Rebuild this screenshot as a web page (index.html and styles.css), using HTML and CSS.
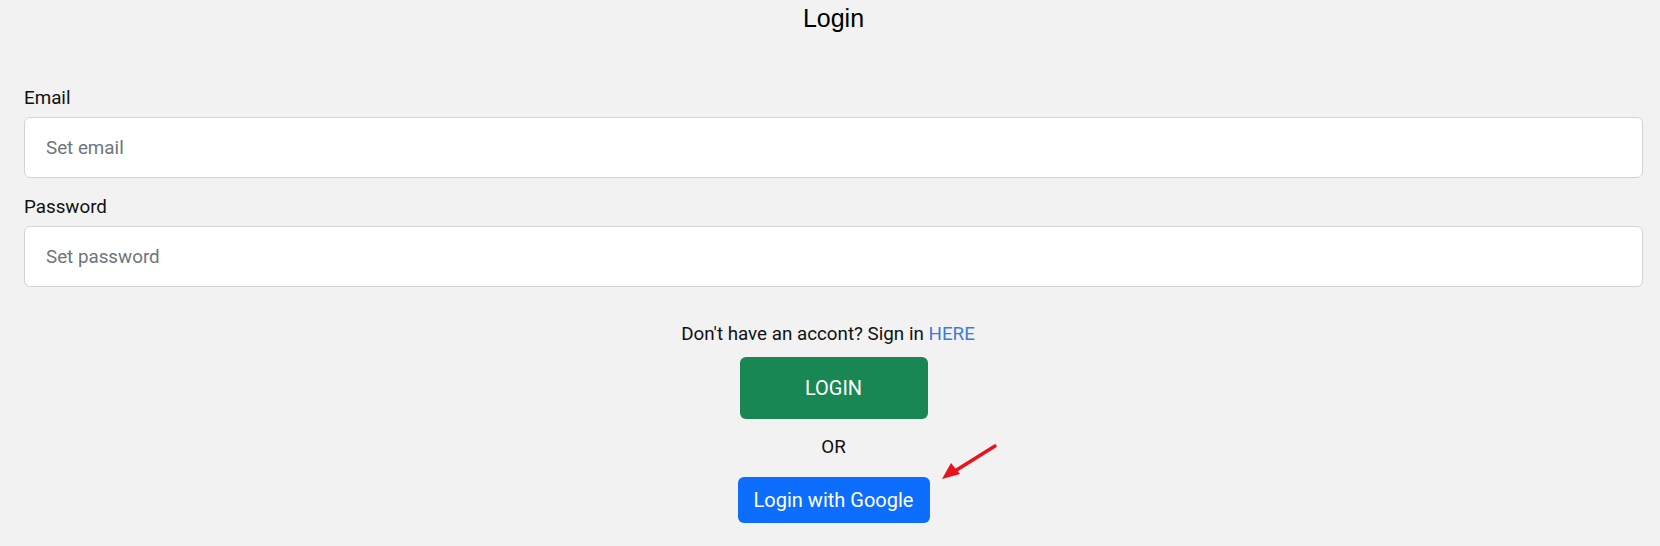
FILE: index.html
```html
<!DOCTYPE html>
<html>
<head>
<meta charset="utf-8">
<link rel="stylesheet" href="styles.css">
</head>
<body>
<div class="page">
  <h1 class="title">Login</h1>
  <form class="form">
    <div class="field">
      <label class="label">Email</label>
      <input class="input" type="email" placeholder="Set email">
    </div>
    <div class="field">
      <label class="label">Password</label>
      <input class="input" type="password" placeholder="Set password">
    </div>
    <div class="actions">
      <p class="signup">Don't have an accont? Sign in <a class="link" href="#">HERE</a></p>
      <button type="button" class="btn btn-login">LOGIN</button>
      <p class="or">OR</p>
      <div class="google-wrap">
        <button type="button" class="btn btn-google">Login with Google</button>
        <svg class="arrow" width="60" height="40" viewBox="0 0 60 40">
          <line x1="56" y1="4" x2="16" y2="29" stroke="#e8141b" stroke-width="3.5" stroke-linecap="round"/>
          <polygon points="3,37 12,21 21,32" fill="#e8141b"/>
        </svg>
      </div>
    </div>
  </form>
</div>
</body>
</html>
```
FILE: styles.css
```css
* { box-sizing: border-box; }
html, body {
  margin: 0;
  padding: 0;
  background: #f2f2f2;
}
body {
  font-family: Roboto, "Liberation Sans", Arial, sans-serif;
  font-size: 18.8px;
  color: #111;
}
.page {
  padding: 0 17px 0 24px;
}
.title {
  margin: 0;
  padding-top: 3px;
  font-family: "Liberation Sans", Arial, sans-serif;
  font-weight: 400;
  font-size: 25px;
  line-height: 30px;
  text-align: center;
  color: #000;
}
.form {
  margin-top: 53px;
  display: flex;
  flex-direction: column;
  gap: 17px;
}
.field {
  display: flex;
  flex-direction: column;
}
.label {
  font-size: 18.8px;
  line-height: 24px;
  margin-bottom: 7px;
  color: #111;
}
.input {
  height: 61px;
  width: 100%;
  border: 1px solid #d2d4d8;
  border-radius: 6px;
  background: #fff;
  padding: 0 21px;
  font-family: Roboto, "Liberation Sans", Arial, sans-serif;
  font-size: 18.8px;
  color: #212529;
  outline: none;
}
.input::placeholder {
  color: #6c757d;
}
.actions {
  display: flex;
  flex-direction: column;
  align-items: center;
  margin-top: 18px;
}
.signup {
  margin: 0;
  padding-right: 11px;
  font-size: 18.8px;
  line-height: 24px;
  color: #111;
}
.link {
  color: #3b7ddd;
  text-decoration: none;
}
.btn {
  border: none;
  border-radius: 6px;
  color: #fff;
  font-family: Roboto, "Liberation Sans", Arial, sans-serif;
  cursor: pointer;
}
.btn-login {
  margin-top: 11px;
  width: 188px;
  height: 62px;
  background: #198754;
  font-size: 20px;
  font-weight: 400;
}
.or {
  margin: 16px 0 0;
  font-size: 18.8px;
  line-height: 24px;
}
.google-wrap {
  position: relative;
  margin-top: 18px;
}
.btn-google {
  width: 192px;
  height: 46px;
  background: #0d6efd;
  font-size: 20px;
}
.arrow {
  position: absolute;
  left: 201px;
  top: -35px;
}
```
